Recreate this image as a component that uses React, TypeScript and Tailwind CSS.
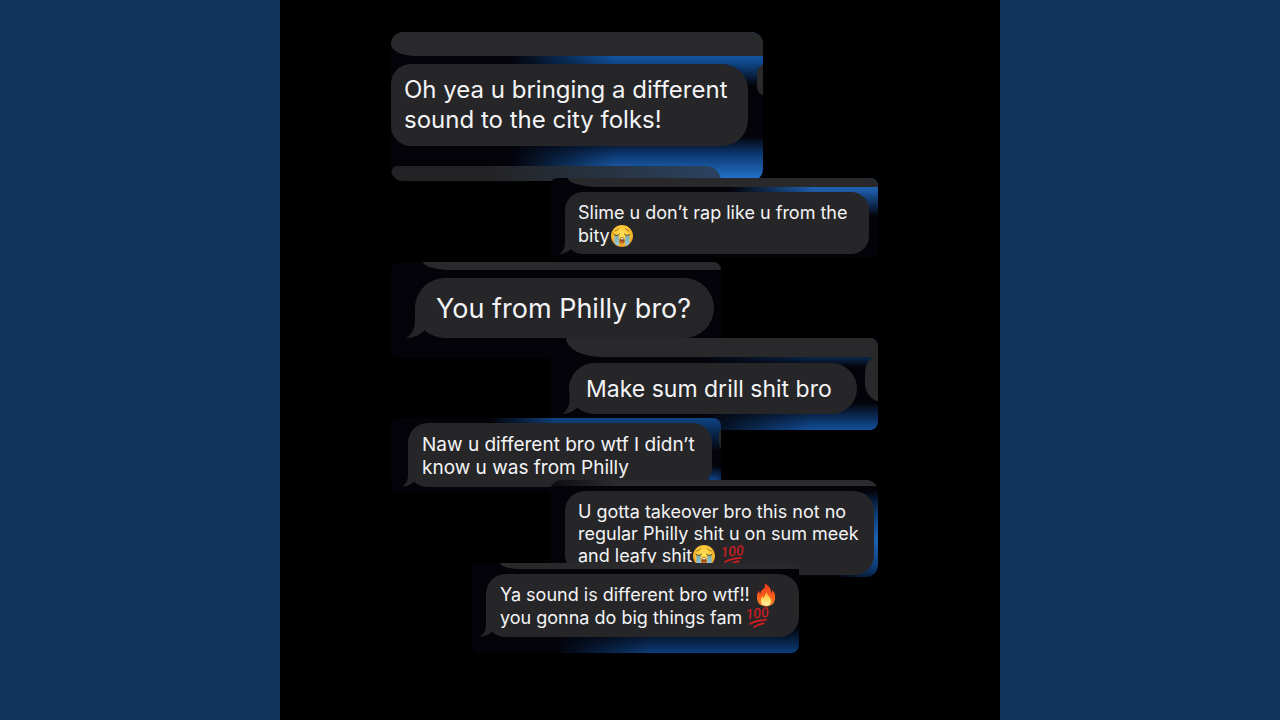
import type { ReactNode } from 'react';
import clsx from 'clsx';

function CryingFace() {
  return (
    <svg viewBox="0 1 24 24" role="img" aria-label="Loudly crying face" className="-my-1 inline-block h-6 w-6 overflow-visible align-middle">
      <defs>
        <radialGradient id="cry-face" cx="50%" cy="42%" r="58%">
          <stop offset="0" stopColor="#ffe45a" />
          <stop offset="0.65" stopColor="#fcc433" />
          <stop offset="1" stopColor="#e39320" />
        </radialGradient>
        <linearGradient id="cry-tear" x1="0" y1="0" x2="0" y2="1">
          <stop offset="0" stopColor="#7fa9a4" />
          <stop offset="1" stopColor="#8ccdf0" />
        </linearGradient>
      </defs>
      <circle cx="12" cy="12" r="11" fill="url(#cry-face)" />
      <path d="M4.8 7C6 6.7 7.6 6 8.6 4.6M19.2 7C18 6.7 16.4 6 15.4 4.6" stroke="#8a5a1a" strokeWidth="0.8" fill="none" strokeLinecap="round" />
      <path d="M4.4 11H8.8V22C7 21.4 5.4 20.2 4.4 18.8ZM15.2 11H19.6V18.8C18.6 20.2 17 21.4 15.2 22Z" fill="url(#cry-tear)" />
      <path d="M3.8 10.2C5.2 11.8 8.2 11.8 9.6 10.2M14.4 10.2C15.8 11.8 18.8 11.8 20.2 10.2" stroke="#6b4a1c" strokeWidth="1" fill="none" strokeLinecap="round" />
      <path d="M12 13.2C14 13.2 14.6 15.2 14.6 17C14.6 19 13.8 19.6 12 19.6S9.4 19 9.4 17C9.4 15.2 10 13.2 12 13.2Z" fill="#8a4a18" />
      <path d="M10.2 15.2C10.6 13.6 13.4 13.6 13.8 15.2Z" fill="#fff" />
      <path d="M10 18.2C10.8 16.8 13.2 16.8 14 18.2C13.6 19.2 10.4 19.2 10 18.2Z" fill="#e8683c" />
    </svg>
  );
}

function Fire() {
  return (
    <svg viewBox="0 1 24 24" role="img" aria-label="Fire" className="-my-1 ml-1 inline-block h-6 w-6 overflow-visible align-middle">
      <defs>
        <linearGradient id="fire-outer" x1="0" y1="0" x2="0" y2="1">
          <stop offset="0" stopColor="#ee3d1c" />
          <stop offset="0.5" stopColor="#f9581c" />
          <stop offset="1" stopColor="#ff8f2b" />
        </linearGradient>
        <linearGradient id="fire-inner" x1="0" y1="0" x2="0" y2="1">
          <stop offset="0" stopColor="#ffa62e" />
          <stop offset="0.6" stopColor="#ffe066" />
          <stop offset="1" stopColor="#fff0b0" />
        </linearGradient>
      </defs>
      <path d="M10.4 0.6C15.4 2.6 17.4 6.4 17.2 10.2C18 9.4 18.4 8.2 18.2 6.8C20.6 9.2 21.3 12 21.1 15C20.8 20.2 17.4 23.4 12.2 23.4C6.8 23.4 3.4 20.2 3 15.2C2.8 12 3.8 9.6 4.8 7.6C5 9 5.4 10 6.2 10.8C6.6 7.4 9.4 6.6 10.4 4.8C11.2 3.4 11 2 10.4 0.6Z" fill="url(#fire-outer)" />
      <path d="M12.6 8.6C13 12.2 16 13.4 16.8 16.6C17.6 20 15.4 22.8 12.2 22.8C8.8 22.8 6.6 20.6 7 17.2C7.2 15.4 8 14.2 8.6 13C8.8 14 9.2 14.8 9.8 15.2C9.8 12.6 12.2 11.6 12.6 8.6Z" fill="url(#fire-inner)" />
    </svg>
  );
}

function Hundred({ className }: { className?: string }) {
  return (
    <svg viewBox="0 2 24 24" role="img" aria-label="Hundred points" className={clsx('-my-1 inline-block h-6 w-6 overflow-visible align-middle', className)}>
      <g transform="rotate(-6 12 12)" fill="#c51f22">
        <text x="0" y="13" fontFamily="Roboto, sans-serif" fontSize="14" fontStyle="italic" fontWeight="500">
          100
        </text>
        <path d="M2.4 17.4C8 14.8 14 14.4 20.4 14.8C20.8 15.4 20.6 16.2 20 16.6C14 16.2 8.4 17 3 19Z" />
        <path d="M6 21.4C9.8 19 13.6 18 17.6 17.8C18 18.4 18 19.2 17.4 19.8C13.6 20 10.2 21.2 6.6 23Z" />
      </g>
    </svg>
  );
}

function Tail({ className }: { className: string }) {
  return (
    <svg viewBox="0 0 24 32" aria-hidden="true" className={clsx('absolute bottom-0', className)}>
      <path d="M0 32C5 29 9 24 9 15V0H24V29L19 24C14 29 7 32 0 32Z" fill="#262628" />
    </svg>
  );
}

function Snippet({ className, children }: { className: string; children: ReactNode }) {
  return (
    <li className={clsx('relative flex max-w-full flex-col overflow-hidden bg-[#030309]', className)}>
      {children}
    </li>
  );
}

// Leftover edge of the neighbouring message at the top of a crop
function Strip({ className }: { className: string }) {
  return <div className={clsx('bg-[#29292b]', className)} />;
}

function Bubble({ className, tail, children }: { className: string; tail?: string; children: ReactNode }) {
  return (
    <div className={clsx('relative bg-[#262628] whitespace-nowrap text-[#f4f4f6]', className)}>
      {tail && <Tail className={tail} />}
      <p className="relative">{children}</p>
    </div>
  );
}

export default function App() {
  return (
    <div className="flex min-h-screen justify-center bg-[#10335c] font-['Inter',sans-serif]">
      <main className="w-full max-w-[720px] bg-black pt-8 pr-[122px] pb-16 pl-[111px]">
        <ul className="flex flex-col items-start">
          <Snippet className="w-[372px] rounded-xl bg-[linear-gradient(to_right,#030309_32%,transparent_60%),linear-gradient(to_bottom,#12549f_16%,#0f4a8f_20%,#030309_36%,#030309_70%,#0c376f_82%,#2678d4_100%)]">
            <Strip className="h-6 rounded-bl-[24px_12px]" />
            <Bubble className="mt-2 mr-[15px] rounded-l-[20px] rounded-r-[26px] py-[11px] pl-[13px] text-[24px] leading-[30px]">
              Oh yea u bringing a different
              <br />
              sound to the city folks!
            </Bubble>
            <div className="mt-5 mr-[42px] h-[15px] rounded-tl-lg rounded-tr-[18px] rounded-bl-lg bg-linear-to-r from-[#232325] from-30% to-[#2a4361]" />
            <div className="absolute top-8 -right-3 h-8 w-[18px] rounded-full bg-[#29292b]" />
          </Snippet>

          <Snippet className="-mt-[3px] w-[328px] self-end rounded-lg bg-[linear-gradient(to_right,#030309_55%,transparent_80%),linear-gradient(to_bottom,#2166b5_10%,#1b549c_18%,#030309_48%)]">
            <Strip className="ml-[18px] h-[9px] rounded-bl-[30px_9px]" />
            <Bubble
              className="mt-[5px] mr-[9px] mb-1 ml-[15px] rounded-[18px] pt-[9px] pb-[7px] pl-[13px] text-[18px] leading-[23px]"
              tail="-left-[6px] h-[21px] w-4"
            >
              Slime u don’t rap like u from the
              <br />
              bity
              <CryingFace />
            </Bubble>
          </Snippet>

          <Snippet className="mt-1 w-[330px] rounded-lg">
            <Strip className="ml-8 h-2 rounded-bl-[30px_8px]" />
            <Bubble
              className="mt-2 mr-[7px] mb-5 ml-6 rounded-[30px] pt-[13px] pb-[11px] pl-[21px] text-[27px] leading-[36px]"
              tail="-left-[9px] h-8 w-6"
            >
              You from Philly bro?
            </Bubble>
          </Snippet>

          <Snippet className="-mt-[20px] w-[328px] self-end rounded-lg bg-[linear-gradient(to_right,#030309_45%,transparent_80%),linear-gradient(to_bottom,#0a2446_22%,#030309_32%,#030309_70%,#12509c_100%)]">
            <Strip className="ml-4 h-[19px] rounded-bl-[36px_19px]" />
            <Bubble
              className="mt-[6px] mr-[21px] mb-4 ml-[19px] rounded-[26px] pt-[11px] pb-[9px] pl-[17px] text-[23px] leading-[31px]"
              tail="-left-[7px] h-[27px] w-5"
            >
              Make sum drill shit bro
            </Bubble>
            <div className="absolute top-4 -right-[23px] h-12 w-9 rounded-full bg-[#29292b]" />
          </Snippet>

          <Snippet className="-mt-3 w-[330px] rounded-lg bg-[linear-gradient(to_right,#030309_30%,transparent_50%),radial-gradient(ellipse_24px_14px_at_322px_62px,#0f4488_0%,transparent_100%),linear-gradient(to_bottom,#0f4482_0%,#0c366b_10%,#030309_45%)]">
            <Bubble
              className="mt-[5px] mr-[9px] mb-[5px] ml-[17px] rounded-[20px] pt-[10px] pb-2 pl-[14px] text-[19px] leading-[23px]"
              tail="-left-[6px] h-[22px] w-4"
            >
              Naw u different bro wtf I didn’t
              <br />
              know u was from Philly
            </Bubble>
            <div className="absolute top-2 -right-3 h-6 w-[14px] rounded-full bg-[#29292b]" />
          </Snippet>

          <Snippet className="-mt-[12px] w-[328px] self-end rounded-xl bg-[radial-gradient(ellipse_60px_50px_at_328px_60px,#1c64b4_0%,#0f3f7c_50%,transparent_100%)]">
            <Strip className="h-[6px] bg-linear-to-r from-[#0c0c12] to-[#2c2c2f] to-20%" />
            <Bubble
              className="mt-[5px] mr-1 mb-[2px] ml-[15px] rounded-[20px] pt-[10px] pb-2 pl-[13px] text-[18px] leading-[22px]"
            >
              U gotta takeover bro this not no
              <br />
              regular Philly shit u on sum meek
              <br />
              and leafy shit
              <CryingFace /> <Hundred />
            </Bubble>
          </Snippet>

          <Snippet className="-mt-[14px] ml-[81px] w-[327px] rounded-br-lg rounded-bl-lg bg-[linear-gradient(to_right,#030309_25%,transparent_55%),linear-gradient(to_bottom,#030309_72%,#0d3d7a_100%)]">
            <Strip className="ml-7 h-[6px] rounded-bl-[20px_6px]" />
            <Bubble
              className="mt-[5px] mb-4 ml-[14px] rounded-[20px] pt-[9px] pb-2 pl-[14px] text-[18px] leading-[23px]"
              tail="-left-[6px] h-[22px] w-4"
            >
              Ya sound is different bro wtf!!
              <Fire />
              <br />
              you gonna do big things fam
              <Hundred className="ml-1" />
            </Bubble>
          </Snippet>
        </ul>
      </main>
    </div>
  );
}
